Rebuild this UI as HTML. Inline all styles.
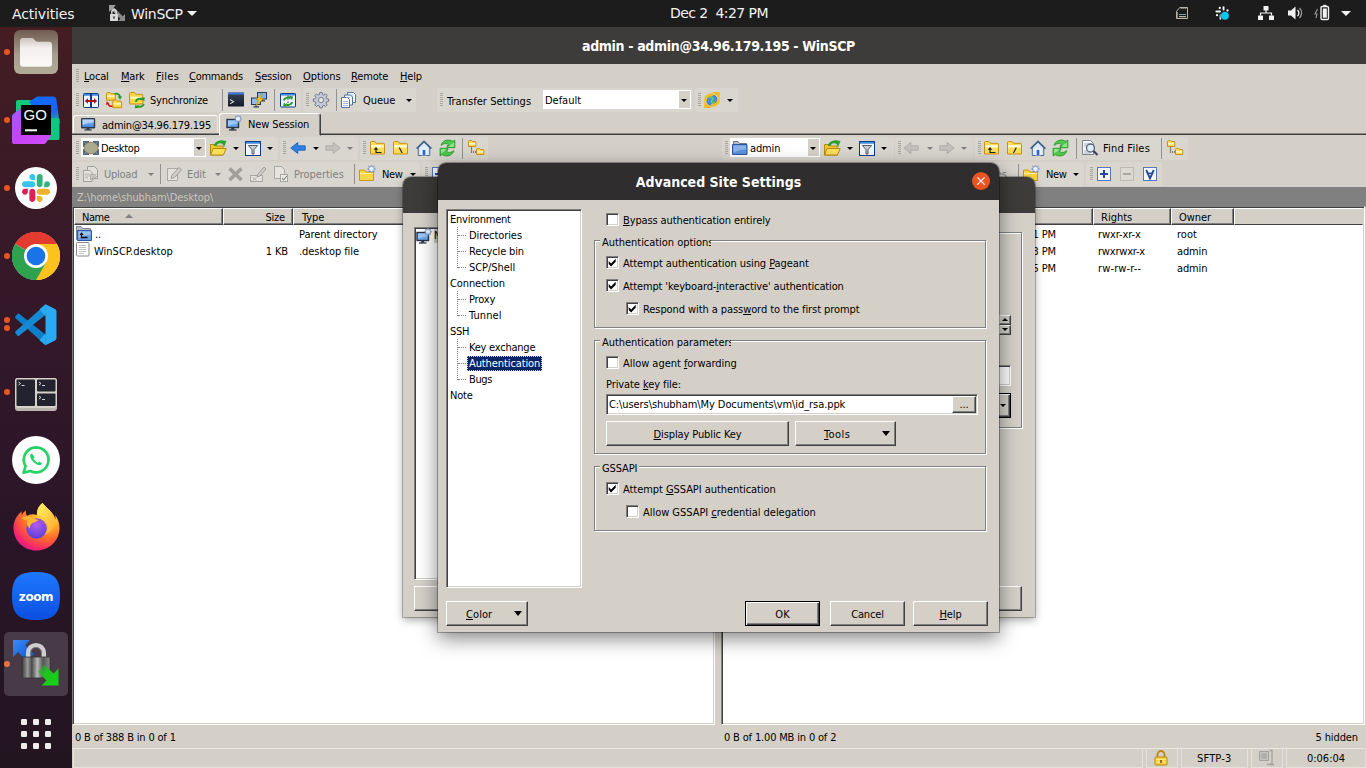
<!DOCTYPE html>
<html lang="en"><head><meta charset="utf-8"><title>WinSCP - Advanced Site Settings</title>
<style>
html,body{margin:0;padding:0}
body{width:1366px;height:768px;overflow:hidden;background:#d4d0c8;position:relative;
 font-family:"DejaVu Sans Condensed","DejaVu Sans","Liberation Sans",sans-serif;font-size:11px;font-stretch:condensed;color:#000;letter-spacing:-0.12px}
svg text{font-stretch:normal}
.a{position:absolute}
.t{position:absolute;white-space:pre;line-height:14px;height:14px}
.g{color:#808080}
u{text-decoration:underline;text-underline-offset:1px}
svg{position:absolute;overflow:visible}
#topbar{left:0;top:0;width:1366px;height:27px;background:#1c1c1c;color:#f2f2f2;font-size:14px;letter-spacing:0;font-stretch:normal;font-family:"DejaVu Sans","Liberation Sans",sans-serif}
#topbar .t{line-height:27px;height:27px;top:1px}
#dock{left:0;top:27px;width:72px;height:741px;background:linear-gradient(180deg,#451d22 0%,#3e1b25 12%,#331829 40%,#291527 70%,#231520 100%)}
.dot{position:absolute;left:4px;width:6px;height:6px;border-radius:3px;background:#e95420}
#wtitle{left:72px;top:27px;width:1294px;height:37px;background:#3d3c3a;color:#fff;font-weight:bold;font-size:14px;text-align:center;line-height:38px;letter-spacing:0;text-indent:-1px}
.tb{position:absolute;background:#d9d6cf;border-radius:3px}
.grip{position:absolute;width:3px;border-left:0;background:repeating-linear-gradient(180deg,#a8a59e 0,#a8a59e 1px,transparent 1px,transparent 2px)}
.sep{position:absolute;width:1px;background:#949290}
.sunk{position:absolute;border:1px solid;border-color:#808080 #fff #fff #808080;box-shadow:inset 1px 1px 0 #404040,inset -1px -1px 0 #d4d0c8;background:#fff;box-sizing:border-box}
.btn{position:absolute;border:1px solid;border-color:#fff #404040 #404040 #fff;box-shadow:inset -1px -1px 0 #808080,inset 1px 1px 0 #d4d0c8;background:#d4d0c8;box-sizing:border-box;text-align:center}
.hdr{position:absolute;border:1px solid;border-color:#fff #404040 #404040 #fff;box-shadow:inset -1px -1px 0 #808080;background:#d4d0c8;box-sizing:border-box;height:17px}
.grp{position:absolute;border:1px solid #808080;box-shadow:1px 1px 0 #fff,inset 1px 1px 0 #fff;box-sizing:border-box}
.glab{position:absolute;background:#d4d0c8;white-space:pre;line-height:14px;height:14px;overflow:hidden}
.cb{position:absolute;width:13px;height:13px;box-sizing:border-box;background:#fff;border:1px solid;border-color:#808080 #fff #fff #808080;box-shadow:inset 1px 1px 0 #404040,inset -1px -1px 0 #d4d0c8}
.arr{position:absolute;width:0;height:0;border-left:3px solid transparent;border-right:3px solid transparent;border-top:3px solid #000}
.arr.d{border-top-color:#808080}
.dlg{position:absolute;background:#d4d0c8;border-radius:8px 8px 0 0}
.dtitle{position:absolute;left:0;top:0;right:0;border-radius:8px 8px 0 0;color:#fff;font-weight:bold;font-size:14px;text-align:center}
.tree .t{left:0}
.dots{position:absolute;border-left:1px dotted #808080}
.dotsh{position:absolute;border-top:1px dotted #808080;height:0}
</style></head>
<body>
<div id="topbar" class="a"><div class="t" style="left:12px;letter-spacing:-0.158px;">Activities</div><svg style="left:108px;top:4px" width="18" height="18" viewBox="0 0 18 18" ><path d="M1 1h7l-2.300 2.300 4.500 4.500-2.400 2.400-4.500-4.500-2.300 2.300z" fill="#9c9c9c"/><path d="M17 17h-7l2.300-2.300-4.500-4.500 2.400-2.400 4.500 4.500 2.300-2.300z" fill="#8a8a8a"/><rect x="2" y="10" width="8" height="7" rx=".6" fill="#d8d8d8"/><path d="M3.800 10v-2a2.200 2.200 0 0 1 4.400 0v2" fill="none" stroke="#d8d8d8" stroke-width="1.400"/><rect x="5.300" y="12.300" width="1.400" height="2.400" fill="#333"/></svg><div class="t" style="left:131px;letter-spacing:-0.276px;">WinSCP</div><div class="a" style="left:187px;top:11px;width:0;height:0;border-left:5px solid transparent;border-right:5px solid transparent;border-top:5px solid #f2f2f2"></div><div class="t" style="left:670px;top:0;letter-spacing:-0.555px;">Dec 2  4:27 PM</div><svg style="left:1176px;top:7px" width="12" height="12" viewBox="0 0 12 12" ><path d="M3.800 .5h7.700v11h-11v-7.200z" fill="none" stroke="#b8b4aa" stroke-width="1"/><path d="M4.500 .8l1 1.100 1-1.100 1 1.100 1-1.100 1 1.100 1-1.100M.8 5l1.100 1-1.100 1 1.100 1-1.100 1 1.100 1-1.100 1" fill="none" stroke="#b8b4aa" stroke-width=".8"/><path d="M3 7.500h7" stroke="#7f9aa8" stroke-width="1"/><path d="M3 9.700h7" stroke="#ddd8cc" stroke-width="1"/></svg><svg style="left:1215px;top:5px" width="16" height="16" viewBox="0 0 16 16" ><g fill="#f4f4f4"><circle cx="4.800" cy="3" r="1.150"/><rect x="7.600" y="1.200" width="1.900" height="4.300" rx=".9"/><rect x=".4" y="5.600" width="5.600" height="1.900" rx=".9"/><circle cx="12.500" cy="5.500" r="1.150"/><circle cx="2" cy="10.200" r="1.150"/><rect x="4.600" y="9.300" width="1.600" height="5.500" rx=".8"/></g><circle cx="9.900" cy="10.800" r="4.300" fill="#0bc8f2" stroke="#1c1c1c" stroke-width=".5"/></svg><svg style="left:1258px;top:5px" width="16" height="16" viewBox="0 0 16 16" ><g fill="#f2f2f2"><rect x="5.500" y="1" width="5" height="4.500" rx=".6"/><rect x="0" y="10.500" width="5" height="4.500" rx=".6"/><rect x="11" y="10.500" width="5" height="4.500" rx=".6"/></g><path d="M8 5v3M2.500 10.500v-2.500h11v2.500" fill="none" stroke="#f2f2f2" stroke-width="1.200"/></svg><svg style="left:1287px;top:5px" width="16" height="16" viewBox="0 0 16 16" ><path d="M1 5.500h3l4.500-4v13l-4.500-4h-3z" fill="#f2f2f2"/><path d="M10.500 5a4 4 0 0 1 0 6" fill="none" stroke="#f2f2f2" stroke-width="1.300"/><path d="M12.500 3a7 7 0 0 1 0 10" fill="none" stroke="#9a9a9a" stroke-width="1.300"/></svg><svg style="left:1314px;top:4px" width="18" height="18" viewBox="0 0 18 18" ><path d="M3.500 5l-2.500 5h2l-1 4" fill="none" stroke="#9a9a9a" stroke-width="1.100"/><rect x="7" y="2.500" width="7.500" height="13" rx="1.200" fill="none" stroke="#f2f2f2" stroke-width="1.400"/><rect x="9.300" y=".8" width="3" height="2" fill="#f2f2f2"/><rect x="8.800" y="4.500" width="4" height="9.200" fill="#f2f2f2"/></svg><div class="a" style="left:1341px;top:11px;width:0;height:0;border-left:5px solid transparent;border-right:5px solid transparent;border-top:5px solid #f2f2f2"></div></div>
<div id="dock" class="a"><div class="dot" style="top:22px"></div>
<div class="dot" style="top:90px"></div>
<div class="dot" style="top:158px"></div>
<div class="dot" style="top:226px"></div>
<div class="dot" style="top:362px"></div>
<div class="dot" style="top:634px"></div>
<div class="dot" style="top:290px"></div>
<div class="dot" style="top:298px"></div>
<div class="a" style="left:4px;top:605px;width:64px;height:64px;border-radius:5px;background:rgba(255,255,255,.16)"></div>
<svg style="left:14px;top:3px" width="44" height="44" viewBox="0 0 44 44" ><defs><linearGradient id="fg" x1="0" y1="0" x2="0" y2="1"><stop offset="0" stop-color="#6f5b52"/><stop offset=".55" stop-color="#a69e8c"/><stop offset="1" stop-color="#b2ab98"/></linearGradient><linearGradient id="ff" x1="0" y1="0" x2="0" y2="1"><stop offset="0" stop-color="#cfc4c0"/><stop offset=".35" stop-color="#f3efee"/><stop offset="1" stop-color="#fbf9f8"/></linearGradient></defs>
<rect x="0" y="0" width="44" height="44" rx="6" fill="url(#fg)"/><path d="M6 11q0-3 3-3h8.500q1.500 0 2.500 1.200l1.300 1.500q.8 1 2.500 1h11.200q3 0 3 3v19q0 3-3 3h-26q-3 0-3-3z" fill="url(#ff)"/></svg>
<svg style="left:12px;top:69px" width="48" height="48" viewBox="0 0 48 48" ><defs><linearGradient id="g1" x1="0" y1="0" x2="1" y2="1"><stop offset="0" stop-color="#9a5cff"/><stop offset=".5" stop-color="#c445f5"/><stop offset="1" stop-color="#d34dfa"/></linearGradient><linearGradient id="g2" x1=".2" y1="0" x2=".7" y2="1"><stop offset="0" stop-color="#0a6bff"/><stop offset=".6" stop-color="#1f62f0"/><stop offset="1" stop-color="#10c090"/></linearGradient></defs>
<rect x="4" y="4" width="16" height="22" rx="2" fill="#14c77f"/><path d="M17 6l8-5.500h16.500q2.500 0 2.800 2.500l3.400 24-8 6z" fill="url(#g2)"/><path d="M36 22h10q1.500 0 1.500 1.500v19q0 1.500-1.500 1.500h-10z" fill="#10c681"/><path d="M0 20.500q0-1.500 1.200-2.400l8.800-6.600v27.500h29.500l-5.500 7.800q-1 1.200-2.500 1.200h-29.800q-1.700 0-1.700-1.700z" fill="url(#g1)"/><rect x="9" y="9" width="30" height="30" fill="#000"/><rect x="13" y="33.300" width="12" height="2" fill="#fff"/><text x="11.400" y="24.300" font-family="Liberation Sans,sans-serif" font-size="15" fill="#fff" letter-spacing=".3">GO</text></svg>
<svg style="left:15px;top:140px" width="42" height="42" viewBox="0 0 42 42" ><circle cx="21" cy="21" r="21" fill="#fff"/>
<g transform="translate(7 7) scale(.228)"><path fill="#e01e5a" d="M25.800 77.600c0 7.100-5.800 12.900-12.900 12.900S0 84.700 0 77.600s5.800-12.900 12.900-12.900h12.900v12.900zm6.500 0c0-7.100 5.800-12.900 12.900-12.900s12.900 5.800 12.900 12.900v32.300c0 7.100-5.800 12.900-12.900 12.900s-12.900-5.800-12.900-12.900V77.600z"/><path fill="#36c5f0" d="M45.200 25.800c-7.100 0-12.900-5.800-12.900-12.900S38.100 0 45.200 0s12.900 5.800 12.900 12.900v12.900H45.200zm0 6.500c7.100 0 12.900 5.800 12.900 12.900s-5.800 12.900-12.900 12.900H12.900C5.800 58.100 0 52.300 0 45.200s5.800-12.900 12.900-12.900h32.300z"/><path fill="#2eb67d" d="M97 45.200c0-7.100 5.800-12.900 12.900-12.900s12.900 5.800 12.900 12.900-5.800 12.900-12.900 12.900H97V45.200zm-6.500 0c0 7.100-5.800 12.900-12.900 12.900s-12.900-5.800-12.900-12.900V12.900C64.700 5.800 70.500 0 77.600 0s12.900 5.800 12.900 12.900v32.300z"/><path fill="#ecb22e" d="M77.600 97c7.100 0 12.900 5.800 12.900 12.900s-5.800 12.900-12.900 12.900-12.900-5.800-12.900-12.900V97h12.900zm0-6.500c-7.100 0-12.900-5.800-12.900-12.900s5.800-12.900 12.900-12.900h32.300c7.100 0 12.900 5.800 12.900 12.900s-5.800 12.900-12.900 12.900H77.600z"/></g></svg>
<svg style="left:12px;top:205px" width="48" height="48" viewBox="0 0 48 48" ><circle cx="24" cy="24" r="24" fill="#fff"/><path d="M24 24L3.220 12A24 24 0 0 1 44.780 12z" fill="#e33b2e"/><path d="M24 24l20.780-12A24 24 0 0 1 24 48z" fill="#fcc31e"/><path d="M24 24l0 24A24 24 0 0 1 3.220 12z" fill="#2fa24f"/>
<path d="M24 12h20.780A24 24 0 0 0 3.220 12z" fill="#e33b2e"/><path d="M34.390 30L24 48A24 24 0 0 0 44.780 12H24z" fill="#fcc31e"/><path d="M13.610 30L3.220 12A24 24 0 0 0 24 48l10.390-18z" fill="#2fa24f"/>
<circle cx="24" cy="24" r="12" fill="#fff"/><circle cx="24" cy="24" r="9.300" fill="#1a73e8"/></svg>
<svg style="left:15px;top:275.5px" width="42" height="43.5" viewBox="0 0 42 42" preserveAspectRatio="none"><path d="M3.800 10.200L31 31v10L.6 14.800q-.9-1-.1-2l2-2.300q.6-.7 1.300-.3z" fill="#0d7fc8"/><path d="M3.800 31.800L31 11V1L.6 27.200q-.9 1-.1 2l2 2.300q.6.700 1.300.3z" fill="#1689d2"/><path d="M30.500 1.200l9.500 4.500q1.500.8 1.500 2.500v25.600q0 1.700-1.500 2.500l-9.500 4.500z" fill="#2aaaf2"/><path d="M30.500 1.200l-6 4.800 6 6.800v16.400l-6 6.800 6 4.800z" fill="#2aaaf2"/></svg>
<svg style="left:15px;top:351px" width="42" height="33" viewBox="0 0 42 33" ><rect x="0" y="0" width="42" height="33" rx="3" fill="#b9b5ae"/><rect x="0" y="0" width="42" height="30" rx="3" fill="#d4d1cb"/><rect x="1.500" y="1.500" width="18.500" height="26.500" rx="1" fill="#23222f"/><rect x="22" y="1.500" width="18.500" height="12" rx="1" fill="#23222f"/><rect x="22" y="15.500" width="18.500" height="12.500" rx="1" fill="#23222f"/><path d="M3.500 4l2 1.500-2 1.500M6.500 7.500h3M24 4l2 1.500-2 1.500M27 7.500h3M24 18l2 1.500-2 1.500M27 21.500h3" fill="none" stroke="#e8e8e8" stroke-width=".9"/></svg>
<svg style="left:12px;top:409px" width="48" height="48" viewBox="0 0 48 48" ><circle cx="24" cy="24" r="24" fill="#fff"/><g transform="translate(24 24) scale(.94) translate(-24 -24)"><path d="M24.300 10.500a13.300 13.300 0 0 0-11.400 20.100l-2.100 7 7.300-1.900a13.300 13.300 0 1 0 6.200-25.200z" fill="none" stroke="#25d366" stroke-width="2.900" stroke-linejoin="round"/><path d="M19.800 17.200c-.6-.1-1.300.3-1.700 1-.5.900-.5 2.200.2 3.700 1.500 3.200 4 5.700 7.200 7.100 1.600.7 2.900.6 3.800 0 .7-.5 1-1.200.9-1.700l-2.900-1.600-1.300 1.300c-1.900-.8-3.800-2.600-4.700-4.600l1.300-1.400z" fill="#25d366"/></g></svg>
<svg style="left:13px;top:476px" width="47" height="48" viewBox="0 0 47 48" ><defs><radialGradient id="fx1" cx=".75" cy=".15" r="1"><stop offset="0" stop-color="#fff36a"/><stop offset=".3" stop-color="#ffbd2e"/><stop offset=".6" stop-color="#ff6a2a"/><stop offset=".85" stop-color="#f5246e"/><stop offset="1" stop-color="#d9169a"/></radialGradient><radialGradient id="fx2" cx=".5" cy=".3" r=".7"><stop offset="0" stop-color="#b65cf0"/><stop offset="1" stop-color="#5b3fd6"/></radialGradient><linearGradient id="fx3" x1="0" y1="0" x2="1" y2="1"><stop offset="0" stop-color="#fff36a"/><stop offset="1" stop-color="#ffa92a"/></linearGradient></defs>
<path d="M29.500 0c-4 3-6 7.500-5.500 12-4-1.500-8.500-.5-10 1-1-1.500-1.500-3.500-1-5.500-2 1-3.500 3-4 4.500-.5-1-.5-2.500-.3-3.700C3 13 0 19.500 .5 26.500 1.500 38.500 11 47.500 23.500 47.500S46 38 46.500 26c.3-5.500-1.500-10.500-4.500-14 .5 1.500 .6 3 .4 4.500C40.500 9.500 35 6.500 29.500 0z" fill="url(#fx1)"/><circle cx="23.500" cy="25.500" r="10.200" fill="url(#fx2)"/><path d="M8 15.500c3-2.500 8-3 12-1 2 1 3.500 2.500 6 2.500-2 .5-3 2-5 2.500-3 .8-4.500 3-4 6-2.500-1.500-4-5-2.500-8-2.500-.5-4.500-1.500-6.500-2z" fill="#ffb52e"/><path d="M29.500 0c-4 3-6 7.500-5.500 12 4.500 0 9 3 10.500 7 1.500 4 .5 9-3 12.500 6-1.500 11-7 11-14.500C40.500 9.500 35 6.500 29.500 0z" fill="url(#fx3)" opacity=".9"/></svg>
<svg style="left:12px;top:545px" width="48" height="48" viewBox="0 0 48 48" ><defs><linearGradient id="zg" x1="0" y1="0" x2="0" y2="1"><stop offset="0" stop-color="#1f78ff"/><stop offset="1" stop-color="#0b4fe0"/></linearGradient></defs><path d="M24 0C6 0 0 6 0 24s6 24 24 24 24-6 24-24S42 0 24 0z" fill="url(#zg)"/><text x="24" y="28.500" text-anchor="middle" font-family="DejaVu Sans,Liberation Sans,sans-serif" font-weight="bold" font-size="12" letter-spacing="-.4" fill="#fff">zoom</text></svg>
<svg style="left:13px;top:613px" width="46" height="46" viewBox="0 0 46 46" ><defs><linearGradient id="wl" x1="0" y1="0" x2="1" y2="0"><stop offset="0" stop-color="#3c3c3c"/><stop offset=".2" stop-color="#9a9a9a"/><stop offset=".35" stop-color="#4a4a4a"/><stop offset=".55" stop-color="#b8b8b8"/><stop offset=".75" stop-color="#555"/><stop offset="1" stop-color="#8a8a8a"/></linearGradient><linearGradient id="wb" x1="0" y1="0" x2="1" y2="1"><stop offset="0" stop-color="#3b8cf5"/><stop offset="1" stop-color="#0a4fd0"/></linearGradient><linearGradient id="wg" x1="0" y1="0" x2="1" y2="1"><stop offset="0" stop-color="#2fae2f" stop-opacity=".15"/><stop offset=".4" stop-color="#1fc21f"/><stop offset="1" stop-color="#12d612"/></linearGradient></defs>
<path d="M0 0h17l-5 5 9 9-7 7-9-9-5 5z" fill="url(#wb)"/><path d="M15 19v-6a8 8 0 0 1 16 0v6" fill="none" stroke="#cfcfcf" stroke-width="4.200"/><path d="M17.500 19v-6a5.500 5.500 0 0 1 11 0v6" fill="none" stroke="#8a8a8a" stroke-width=".8"/><rect x="9" y="17" width="28" height="21" rx="1.500" fill="url(#wl)" stroke="#333" stroke-width=".8"/><path d="M45.500 45.500h-17l5-5-9-9 7-7 9 9 5-5z" fill="url(#wg)"/></svg>
<svg style="left:0px;top:0px" width="72" height="741" viewBox="0 0 72 741" ><rect x="21" y="692" width="6" height="6" rx="1.300" fill="#efedec"/><rect x="33" y="692" width="6" height="6" rx="1.300" fill="#efedec"/><rect x="45" y="692" width="6" height="6" rx="1.300" fill="#efedec"/><rect x="21" y="704" width="6" height="6" rx="1.300" fill="#efedec"/><rect x="33" y="704" width="6" height="6" rx="1.300" fill="#efedec"/><rect x="45" y="704" width="6" height="6" rx="1.300" fill="#efedec"/><rect x="21" y="716" width="6" height="6" rx="1.300" fill="#efedec"/><rect x="33" y="716" width="6" height="6" rx="1.300" fill="#efedec"/><rect x="45" y="716" width="6" height="6" rx="1.300" fill="#efedec"/></svg></div>
<div id="wtitle" class="a"><span style="letter-spacing:-0.337px;">admin - admin@34.96.179.195 - WinSCP</span></div>
<div class="grip" style="left:76px;top:69px;height:14px"></div>
<div class="t " style="left:84px;top:70px;letter-spacing:-0.228px;"><u>L</u>ocal</div>
<div class="t " style="left:121px;top:70px;letter-spacing:-0.227px;"><u>M</u>ark</div>
<div class="t " style="left:156px;top:70px;letter-spacing:0.322px;"><u>F</u>iles</div>
<div class="t " style="left:189px;top:70px;letter-spacing:-0.285px;"><u>C</u>ommands</div>
<div class="t " style="left:255px;top:70px;letter-spacing:-0.145px;"><u>S</u>ession</div>
<div class="t " style="left:303px;top:70px;letter-spacing:-0.098px;"><u>O</u>ptions</div>
<div class="t " style="left:351px;top:70px;letter-spacing:-0.157px;"><u>R</u>emote</div>
<div class="t " style="left:400px;top:70px;letter-spacing:-0.170px;"><u>H</u>elp</div>
<div class="tb" style="left:73px;top:88px;width:228px;height:24px;"></div>
<div class="tb" style="left:303px;top:88px;width:113px;height:24px;"></div>
<div class="tb" style="left:437px;top:88px;width:256px;height:24px;"></div>
<div class="tb" style="left:695px;top:88px;width:43px;height:24px;"></div>
<div class="grip" style="left:76px;top:93px;height:14px"></div>
<svg style="left:83px;top:93px" width="16" height="15" viewBox="0 0 16 15" ><rect x="0.500" y="0.500" width="15" height="14" rx=".8" fill="#eef5fd" stroke="#0b3c84" stroke-width="1"/><rect x="1" y="1" width="14" height="1.800" fill="#4a8ee0"/><rect x="7" y="0.500" width="2" height="14" fill="#0b3c84"/><path d="M1.800 8l3.200-2.800v1.900h6v-1.900l3.200 2.800-3.200 2.800v-1.900h-6v1.900z" fill="#a81414"/></svg>
<svg style="left:106px;top:92px" width="16" height="16" viewBox="0 0 16 16" ><path d="M.5 1.500q0-1 1-1h2.500l1 1.200h3.500q.8 0 .8.800v5.700h-8.800z" fill="#f8d848" stroke="#c8901a"/><path d="M1.200 3.300h7.600v1.800h-7.600z" fill="#fdf3b4"/><path d="M8.500 1.800c3-.6 5.500.8 5.500 3.500" fill="none" stroke="#2a9a2a" stroke-width="1.700"/><path d="M11.600 4.600l2.500 3.200 1.900-3.600z" fill="#2a9a2a"/><path d="M6.800 9q0-1 1-1h2.500l1 1.200h3.500q.8 0 .8.800v5.700h-8.800z" fill="#f8d848" stroke="#c8901a"/><path d="M7.500 10.800h7.600v1.800h-7.600z" fill="#fdf3b4"/><path d="M6.500 14.200c-2 .3-4-.8-4.500-2.500" fill="none" stroke="#d01818" stroke-width="1.500"/><path d="M0 13l.6-3.800 3 2.200z" fill="#d01818"/></svg>
<svg style="left:129px;top:92px" width="16" height="16" viewBox="0 0 16 16" ><path d="M.5 1.500q0-1 1-1h4l1.200 1.800h6.300q.8 0 .8.800v8.900h-13.300z" fill="#f8d848" stroke="#c8901a"/><path d="M1.200 4.600h12v2.500h-12z" fill="#fdf3b4"/><path d="M6.800 9.800a4 3.300 0 0 1 6.800-2" fill="none" stroke="#2a9a2a" stroke-width="1.900"/><path d="M12 5.600l3.800-.2-.6 4z" fill="#2a9a2a"/><path d="M14.800 11.800a4 3.300 0 0 1-6.800 2" fill="none" stroke="#2a9a2a" stroke-width="1.900"/><path d="M9.600 16l-3.800.2.600-4z" fill="#2a9a2a"/></svg>
<div class="t " style="left:150px;top:94px;letter-spacing:-0.210px;">Synchronize</div>
<div class="sep" style="left:222px;top:89px;height:22px"></div>
<svg style="left:228px;top:92px" width="16" height="16" viewBox="0 0 16 16" ><defs><linearGradient id="cg" x1="0" y1="0" x2="0" y2="1"><stop offset="0" stop-color="#3a4458"/><stop offset="1" stop-color="#141a28"/></linearGradient></defs><rect x="0" y=".5" width="16" height="14" rx=".6" fill="url(#cg)"/><rect x="0" y=".5" width="16" height="2" fill="#3f78dc"/><path d="M2 7.500l3.600 2.200-3.600 2.200" fill="none" stroke="#d8d8d8" stroke-width="1.100"/></svg>
<svg style="left:251px;top:92px" width="16" height="16" viewBox="0 0 16 16" ><rect x="6.500" y="0.500" width="9" height="6.500" fill="#7fb2f0" stroke="#2b3a55"/><path d="M11 7v1.500M9 8.800h5" stroke="#2b3a55" stroke-width="1.200"/><rect x="0.500" y="6" width="9" height="6.500" fill="#8fbcf4" stroke="#2b3a55"/><path d="M5 12.500v2M2.500 14.800h5.500" stroke="#2b3a55" stroke-width="1.200"/><path d="M11.500 1.500l-6.500 6.200h3l-3.500 6.300 8-7.500h-3.200z" fill="#ffd21c" stroke="#c8920b" stroke-width=".7"/></svg>
<div class="sep" style="left:274px;top:89px;height:22px"></div>
<svg style="left:280px;top:92px" width="16" height="16" viewBox="0 0 16 16" ><rect x="0.500" y="1.500" width="15" height="13.500" rx=".6" fill="#eef3fb" stroke="#0b3c84" stroke-width="1"/><rect x="1" y="2" width="14" height="1.600" fill="#4a8ee0"/><path d="M8 3.500v11.500" stroke="#1c3f94" stroke-dasharray="1.500 1.500"/><path d="M3.800 8.500a4.200 3.400 0 0 1 6.700-2.200" fill="none" stroke="#2a9a2a" stroke-width="2"/><path d="M9 4l4 .3-1 4z" fill="#2a9a2a"/><path d="M12.200 10a4.200 3.400 0 0 1-6.700 2.200" fill="none" stroke="#2a9a2a" stroke-width="2"/><path d="M7 14.500l-4-.3 1-4z" fill="#2a9a2a"/></svg>
<div class="grip" style="left:306px;top:93px;height:14px"></div>
<svg style="left:313px;top:92px" width="16" height="16" viewBox="0 0 16 16" ><path d="M6.8 0.5h2.4l.4 2 1.3.6 1.7-1.2 1.7 1.7-1.2 1.7.6 1.3 2 .4v2.4l-2 .4-.6 1.3 1.2 1.7-1.7 1.7-1.7-1.2-1.3.6-.4 2h-2.4l-.4-2-1.3-.6-1.7 1.2-1.7-1.7 1.2-1.7-.6-1.3-2-.4v-2.4l2-.4.6-1.3-1.2-1.7 1.7-1.7 1.7 1.2 1.3-.6z" fill="#c4c8d4" stroke="#6d7386" stroke-width=".9"/><circle cx="8" cy="8" r="2.6" fill="#e9e7e2" stroke="#6d7386" stroke-width=".9"/></svg>
<div class="sep" style="left:336px;top:89px;height:22px"></div>
<svg style="left:341px;top:92px" width="16" height="16" viewBox="0 0 16 16" ><path d="M6.5 0.5h6l2 2v8h-8z" fill="#f4f7fc" stroke="#54709c"/><path d="M3.5 3h6l2 2v8h-8z" fill="#f4f7fc" stroke="#54709c"/><path d="M0.5 5.5h6l2 2v8h-8z" fill="#fff" stroke="#54709c"/><path d="M2 9.500h5M2 11.500h5M2 13.500h5" stroke="#8aa6d4" stroke-width=".8"/><path d="M5 5.500h4M8 3h4" stroke="#8aa6d4" stroke-width=".8"/></svg>
<div class="t " style="left:363px;top:94px;letter-spacing:-0.066px;">Queue</div>
<div class="arr" style="left:406px;top:99px"></div>
<div class="grip" style="left:440px;top:93px;height:14px"></div>
<div class="t " style="left:447px;top:95px;letter-spacing:0.044px;">Transfer Settings</div>
<div class="a" style="left:543px;top:90px;width:148px;height:19px;background:#fff"></div>
<div class="t " style="left:545px;top:94px;letter-spacing:-0.025px;">Default</div>
<div class="a" style="left:679px;top:91px;width:11px;height:17px;background:#d4d0c8"></div>
<div class="arr" style="left:681px;top:99px"></div>
<div class="grip" style="left:698px;top:93px;height:14px"></div>
<svg style="left:704px;top:92px" width="16" height="16" viewBox="0 0 16 16" ><circle cx="8" cy="8.200" r="5.300" fill="#3f8ee6" stroke="#2a5ca8" stroke-width=".8"/><path d="M5 6c1.500-1.500 3.500-1 3.800.6s-1.800 1.800-1.200 3.400 2.200 1.200 3.200.4" fill="none" stroke="#6cc75c" stroke-width="2"/><path d="M1.800 9.500c-1-4 2.500-7.500 7.500-6.800" fill="none" stroke="#f4bc22" stroke-width="2.800"/><path d="M8.500 0h7.300v6.800z" fill="#f4bc22"/><path d="M14.200 6.500c1 4-2.500 7.500-7.500 6.800" fill="none" stroke="#f4bc22" stroke-width="2.800"/><path d="M7.500 16h-7.300v-6.800z" fill="#f4bc22"/></svg>
<div class="arr" style="left:727px;top:99px"></div>
<div class="a" style="left:72px;top:133px;width:1294px;height:1px;background:#8c8a86"></div>
<div class="a" style="left:72px;top:134px;width:1294px;height:1px;background:#3c3c3c"></div>
<div class="a" style="left:73px;top:115px;width:145px;height:18px;border:1px solid;border-color:#fff #e8e6e0 transparent #fff;border-radius:3px 3px 0 0;box-sizing:border-box;background:#d4d0c8"></div>
<div class="a" style="left:219px;top:113px;width:102px;height:23px;border:1px solid;border-color:#fff #404040 transparent #fff;box-shadow:inset -1px 0 0 #808080;border-radius:3px 3px 0 0;box-sizing:border-box;background:#d4d0c8"></div>
<svg style="left:81px;top:117px" width="16" height="16" viewBox="0 0 16 16" ><defs><linearGradient id="mg" x1="0" y1="0" x2="0" y2="1"><stop offset="0" stop-color="#a8ccf6"/><stop offset="1" stop-color="#3a7ee0"/></linearGradient></defs><rect x=".7" y="1.700" width="12.800" height="9" rx=".5" fill="url(#mg)" stroke="#2c3a4c" stroke-width="1.400"/><path d="M1.500 2.500h11.200v3c-4 0-7 .8-11.200 2.600z" fill="#c4dcf8" opacity=".75"/><rect x="5.600" y="11" width="3" height="1.600" fill="#2c3a4c"/><rect x="3.400" y="12.300" width="7.400" height="1.300" rx=".5" fill="#2c3a4c"/></svg>
<div class="t " style="left:102px;top:119px;letter-spacing:-0.226px;">admin@34.96.179.195</div>
<svg style="left:226px;top:115px" width="16" height="16" viewBox="0 0 16 16" ><rect x="1" y="4.5" width="11.5" height="8" fill="#6aa7ee" stroke="#2a3348" stroke-width="1.4"/><path d="M2 5.5h9.5v3c-4 0-6 1-9.5 2.5z" fill="#9cc8f8"/><rect x="5.2" y="13" width="3" height="1.6" fill="#2a3348"/><rect x="3" y="14.3" width="7.5" height="1.3" fill="#2a3348"/><polygon points="12.00,0.00 12.80,1.87 14.69,1.11 13.93,3.00 15.80,3.80 13.93,4.60 14.69,6.49 12.80,5.73 12.00,7.60 11.20,5.73 9.31,6.49 10.07,4.60 8.20,3.80 10.07,3.00 9.31,1.11 11.20,1.87" fill="#eef4ff" stroke="#6b86b8" stroke-width=".7"/></svg>
<div class="t " style="left:248px;top:118px;letter-spacing:-0.114px;">New Session</div>
<div class="tb" style="left:73px;top:137px;width:205px;height:23px;"></div>
<div class="tb" style="left:280px;top:137px;width:78px;height:23px;"></div>
<div class="tb" style="left:360px;top:137px;width:128px;height:23px;"></div>
<div class="grip" style="left:76px;top:141px;height:14px"></div>
<div class="a" style="left:81px;top:138px;width:125px;height:19px;background:#fff"></div>
<svg style="left:83px;top:141px" width="16" height="14" viewBox="0 0 16 14" ><g fill="#52627f" stroke="#39465f" stroke-width=".6"><rect x=".3" y=".3" width="5.400" height="5"/><rect x="10.300" y=".3" width="5.400" height="5"/><rect x=".3" y="8.700" width="5.400" height="5"/><rect x="10.300" y="8.700" width="5.400" height="5"/></g><path d="M.8.800l4 3.500M15.200.8l-4 3.500M.8 13.200l4-3.500M15.200 13.200l-4-3.500" stroke="#8d9ab2" stroke-width=".9"/><path d="M5 1.300h6l3.800 3.400v4.600l-3.800 3.400h-6l-3.800-3.400v-4.600z" fill="#a9ab8c" stroke="#77795e" stroke-width=".8"/></svg>
<div class="t " style="left:101px;top:142px;letter-spacing:-0.333px;">Desktop</div>
<div class="a" style="left:194px;top:139px;width:11px;height:17px;background:#d4d0c8"></div>
<div class="arr" style="left:196px;top:147px"></div>
<svg style="left:210px;top:140px" width="17" height="16" viewBox="0 0 17 16" ><path d="M0.5 4.500v10.500h12.500v-9h-6l-1.500-1.500z" fill="#f2c832" stroke="#b8890e"/><path d="M0.600 15l2.400-6.500h13.200l-2.800 6.500z" fill="#fadf5a" stroke="#b8890e"/><path d="M5 6c1-4 5-5.200 8.500-3" fill="none" stroke="#2fa02f" stroke-width="2.600"/><path d="M10.500 0l6 1-2.400 6z" fill="#2fa02f"/></svg>
<div class="arr" style="left:233px;top:147px"></div>
<svg style="left:245px;top:141px" width="16" height="15" viewBox="0 0 16 15" ><rect x="0.500" y="0.500" width="15" height="14" fill="#f2f6fc" stroke="#0b3c84" stroke-width="1"/><rect x="1" y="1" width="14" height="1.800" fill="#4a8ee0"/><path d="M3.500 4.500h9l-3.500 4.200v4.300h-2v-4.300z" fill="#c8ccd4" stroke="#4a4e58" stroke-width=".9"/></svg>
<div class="arr" style="left:267px;top:147px"></div>
<div class="grip" style="left:283px;top:141px;height:14px"></div>
<svg style="left:290px;top:140px" width="16" height="16" viewBox="0 0 16 16" ><path d="M0.8 8l7-5.5v3.3h7.4v4.4h-7.4v3.3z" fill="#2f7fe6" stroke="#1a55b0" stroke-width=".8"/></svg>
<div class="arr" style="left:313px;top:147px"></div>
<svg style="left:325px;top:140px" width="16" height="16" viewBox="0 0 16 16" ><path d="M15.2 8l-7-5.5v3.3h-7.4v4.4h7.4v3.3z" fill="#c4c2bc" stroke="#a8a6a0" stroke-width=".8"/></svg>
<div class="arr d" style="left:347px;top:147px"></div>
<div class="grip" style="left:363px;top:141px;height:14px"></div>
<svg style="left:370px;top:140px" width="16" height="16" viewBox="0 0 16 16" ><path d="M.5 2.500q0-1 1-1h3.500l1.300 1.800h7.200q1 0 1 1v9.700h-14z" fill="#f9dc55" stroke="#c8901a"/><path d="M1.200 5.200h12.600v2h-12.600z" fill="#fffbe0"/><path d="M1.200 7.200h12.600v1h-12.600z" fill="#fdf0a0"/><path d="M11.500 12.500h-5.500v-3.500" fill="none" stroke="#222" stroke-width="1.150"/><path d="M3.700 9.800l2.300-2.800 2.300 2.800z" fill="#222"/></svg>
<svg style="left:393px;top:140px" width="16" height="16" viewBox="0 0 16 16" ><path d="M.5 2.500q0-1 1-1h3.500l1.300 1.800h7.200q1 0 1 1v9.700h-14z" fill="#f9dc55" stroke="#c8901a"/><path d="M1.200 5.200h12.600v2h-12.600z" fill="#fffbe0"/><path d="M1.200 7.200h12.600v1h-12.600z" fill="#fdf0a0"/><path d="M6.300 7.500l2.800 5.500" stroke="#222" stroke-width="1.200"/></svg>
<svg style="left:416px;top:140px" width="16" height="16" viewBox="0 0 16 16" ><path d="M2.300 7.800v7.700h11.400v-7.700l-5.700-5.600z" fill="#dce9f9" stroke="#4a6890" stroke-width="1"/><path d="M0.600 8.600l7.400-7.400 7.400 7.400" fill="none" stroke="#3f5f8a" stroke-width="1.500"/><rect x="5.600" y="8.800" width="4.800" height="6.700" fill="#fff"/><rect x="6.600" y="9.800" width="2.800" height="5.700" fill="#2a68d0"/></svg>
<svg style="left:440px;top:140px" width="16" height="16" viewBox="0 0 16 16" ><path d="M1 5C2 2 5 0 8 0c2 0 3.500.5 4.800 1.400l2-1.400v7.700h-7.600l-.2-1.700 1.600-1c-1.100-1.400-3.100-1.800-4.800-1.200-1 .4-1.600 1-2.200 1.700z" fill="#4fc64f" stroke="#1f8f1f" stroke-width=".8" stroke-linejoin="round"/><path d="M1 5C2 2 5 0 8 0c2 0 3.500.5 4.800 1.400l2-1.400v7.700h-7.600l-.2-1.700 1.600-1c-1.100-1.400-3.100-1.800-4.800-1.200-1 .4-1.600 1-2.200 1.700z" fill="#4fc64f" stroke="#1f8f1f" stroke-width=".8" stroke-linejoin="round" transform="rotate(180 7.450 8)"/><path d="M10 5l4-2.500v4.500h-5z" fill="#8fe28f"/><path d="M5 11l-4 2.500v-4.500h5z" fill="#8fe28f"/></svg>
<div class="sep" style="left:462px;top:138px;height:21px"></div>
<svg style="left:468px;top:140px" width="16" height="16" viewBox="0 0 16 16" ><path d="M.5 1.500q0-1 1-1h2l1 1h2.500q.8 0 .8.800v4.200h-7.300z" fill="#f9dc55" stroke="#c8901a"/><path d="M1.200 3.200h6v1.300h-6z" fill="#fffbe0"/><path d="M8.500 9.500q0-1 1-1h2l1 1h2.500q.8 0 .8.800v4.200h-7.300z" fill="#f9dc55" stroke="#c8901a"/><path d="M9.200 11.200h6v1.300h-6z" fill="#fffbe0"/><path d="M3.500 7.500v4.500h4.500" fill="none" stroke="#222" stroke-width="1.100" stroke-dasharray="1 1"/></svg>
<div class="tb" style="left:73px;top:162px;width:347px;height:24px;"></div>
<div class="tb" style="left:422px;top:162px;width:40px;height:24px;"></div>
<div class="grip" style="left:76px;top:167px;height:14px"></div>
<svg style="left:83px;top:166px" width="16" height="16" viewBox="0 0 16 16" ><path d="M4.500 0.500h7l3 3v9h-10z" fill="#e2dfd8" stroke="#a19f9a"/><path d="M0.500 4.500h6.500l2 2v9h-8.500z" fill="#e6e3dc" stroke="#a19f9a"/><path d="M2 8h5M2 10h5M2 12h3" stroke="#b5b2ac"/><path d="M8 15l5-5v2.500l2.500-2.500v5.500h-5.500l2.500-2.500h-2.500z" fill="#c9c6bf" stroke="#a19f9a" stroke-width=".6" transform="rotate(180 11.500 12)"/></svg>
<div class="t g" style="left:104px;top:168px;letter-spacing:-0.240px;">Upload</div>
<div class="arr d" style="left:148px;top:173px"></div>
<div class="sep" style="left:160px;top:164px;height:20px"></div>
<svg style="left:166px;top:166px" width="16" height="16" viewBox="0 0 16 16" ><path d="M1.500 2.500h10v12h-10z" fill="#e4e1da" stroke="#a9a7a1"/><path d="M5 12.500l1-3.500 7-7.500 2.500 2.500-7 7.500z" fill="#cfccc6" stroke="#9c9a94" stroke-width=".9"/></svg>
<div class="t g" style="left:187px;top:168px;letter-spacing:-0.105px;">Edit</div>
<div class="arr d" style="left:215px;top:173px"></div>
<svg style="left:228px;top:166px" width="16" height="16" viewBox="0 0 16 16" ><path d="M1.500 2.500l12 11.500M13.500 2.500l-12 11.500" stroke="#a19f9a" stroke-width="3.700"/></svg>
<svg style="left:250px;top:166px" width="16" height="16" viewBox="0 0 16 16" ><rect x="0.500" y="9.500" width="12" height="6" fill="#e4e1da" stroke="#a9a7a1"/><path d="M3 11.500l3 3M6 11.500l-3 3" stroke="#a9a7a1"/><path d="M7 11l1-3 6-7 2 2-6 7z" fill="#cfccc6" stroke="#9c9a94" stroke-width=".9"/></svg>
<svg style="left:273px;top:166px" width="16" height="16" viewBox="0 0 16 16" ><path d="M1.500 0.500h7l3 3v9h-10z" fill="#e6e3dc" stroke="#a9a7a1"/><rect x="7.500" y="8.500" width="7" height="7" fill="#eceae4" stroke="#a9a7a1"/><path d="M9 12l1.800 1.800 3-3.800" fill="none" stroke="#8f8d88" stroke-width="1.2"/></svg>
<div class="t g" style="left:294px;top:168px;letter-spacing:-0.017px;">Properties</div>
<div class="sep" style="left:354px;top:164px;height:20px"></div>
<svg style="left:359px;top:165px" width="17" height="16" viewBox="0 0 17 16" ><path d="M0.500 5v10.500h14v-8.500h-7.500l-1.500-2z" fill="#f7d64a" stroke="#c89a12"/><path d="M1 8.500h13" stroke="#fdf0a8"/><polygon points="12.50,0.00 13.34,1.97 15.33,1.17 14.53,3.16 16.50,4.00 14.53,4.84 15.33,6.83 13.34,6.03 12.50,8.00 11.66,6.03 9.67,6.83 10.47,4.84 8.50,4.00 10.47,3.16 9.67,1.17 11.66,1.97" fill="#eef4ff" stroke="#6b86b8" stroke-width=".7"/></svg>
<div class="t " style="left:382px;top:168px;letter-spacing:-0.398px;">New</div>
<div class="arr" style="left:410px;top:173px"></div>
<div class="grip" style="left:425px;top:167px;height:14px"></div>
<svg style="left:432px;top:167px" width="14" height="14" viewBox="0 0 14 14" ><rect x="0.500" y="0.500" width="13" height="13" fill="#f6f8fc" stroke="#5878b8" stroke-width="1"/><path d="M7 3v8M3 7h8" stroke="#2a4a9a" stroke-width="2"/></svg>
<div class="tb" style="left:722px;top:137px;width:172px;height:23px;"></div>
<div class="tb" style="left:895px;top:137px;width:78px;height:23px;"></div>
<div class="tb" style="left:974px;top:137px;width:214px;height:23px;"></div>
<div class="grip" style="left:725px;top:141px;height:14px"></div>
<div class="a" style="left:730px;top:138px;width:90px;height:19px;background:#fff"></div>
<svg style="left:732px;top:140px" width="16" height="16" viewBox="0 0 16 16" ><path d="M1.500 1.500v12h13v-10h-7l-1.500-2z" fill="#b8bcc4" stroke="#6c7486"/><path d="M0.500 4.500h14.500v10h-14.500z" fill="#5f8fd8" stroke="#2f55a0"/><path d="M1.500 5.500h12.500v4c-4 0-8 1-12.500 3z" fill="#8db4ea"/></svg>
<div class="t " style="left:750px;top:142px;letter-spacing:-0.123px;">admin</div>
<div class="a" style="left:808px;top:139px;width:11px;height:17px;background:#d4d0c8"></div>
<div class="arr" style="left:810px;top:147px"></div>
<svg style="left:824px;top:140px" width="17" height="16" viewBox="0 0 17 16" ><path d="M0.5 4.500v10.500h12.500v-9h-6l-1.500-1.500z" fill="#f2c832" stroke="#b8890e"/><path d="M0.600 15l2.400-6.500h13.200l-2.800 6.500z" fill="#fadf5a" stroke="#b8890e"/><path d="M5 6c1-4 5-5.200 8.500-3" fill="none" stroke="#2fa02f" stroke-width="2.600"/><path d="M10.500 0l6 1-2.400 6z" fill="#2fa02f"/></svg>
<div class="arr" style="left:847px;top:147px"></div>
<svg style="left:859px;top:141px" width="16" height="15" viewBox="0 0 16 15" ><rect x="0.500" y="0.500" width="15" height="14" fill="#f2f6fc" stroke="#0b3c84" stroke-width="1"/><rect x="1" y="1" width="14" height="1.800" fill="#4a8ee0"/><path d="M3.500 4.500h9l-3.500 4.200v4.300h-2v-4.300z" fill="#c8ccd4" stroke="#4a4e58" stroke-width=".9"/></svg>
<div class="arr" style="left:881px;top:147px"></div>
<div class="grip" style="left:898px;top:141px;height:14px"></div>
<svg style="left:903px;top:140px" width="16" height="16" viewBox="0 0 16 16" ><path d="M0.8 8l7-5.5v3.3h7.4v4.4h-7.4v3.3z" fill="#c4c2bc" stroke="#a8a6a0" stroke-width=".8"/></svg>
<div class="arr d" style="left:927px;top:147px"></div>
<svg style="left:939px;top:140px" width="16" height="16" viewBox="0 0 16 16" ><path d="M15.2 8l-7-5.5v3.3h-7.4v4.4h7.4v3.3z" fill="#c4c2bc" stroke="#a8a6a0" stroke-width=".8"/></svg>
<div class="arr d" style="left:961px;top:147px"></div>
<div class="grip" style="left:978px;top:141px;height:14px"></div>
<svg style="left:984px;top:140px" width="16" height="16" viewBox="0 0 16 16" ><path d="M.5 2.500q0-1 1-1h3.500l1.300 1.800h7.200q1 0 1 1v9.700h-14z" fill="#f9dc55" stroke="#c8901a"/><path d="M1.200 5.200h12.600v2h-12.600z" fill="#fffbe0"/><path d="M1.200 7.200h12.600v1h-12.600z" fill="#fdf0a0"/><path d="M11.500 12.500h-5.500v-3.500" fill="none" stroke="#222" stroke-width="1.150"/><path d="M3.700 9.800l2.300-2.800 2.300 2.800z" fill="#222"/></svg>
<svg style="left:1007px;top:140px" width="16" height="16" viewBox="0 0 16 16" ><path d="M.5 2.500q0-1 1-1h3.500l1.300 1.800h7.200q1 0 1 1v9.700h-14z" fill="#f9dc55" stroke="#c8901a"/><path d="M1.200 5.200h12.600v2h-12.600z" fill="#fffbe0"/><path d="M1.200 7.200h12.600v1h-12.600z" fill="#fdf0a0"/><path d="M9.300 7.500l-2.800 5.500" stroke="#222" stroke-width="1.200"/></svg>
<svg style="left:1030px;top:140px" width="16" height="16" viewBox="0 0 16 16" ><path d="M2.300 7.800v7.700h11.400v-7.700l-5.700-5.600z" fill="#dce9f9" stroke="#4a6890" stroke-width="1"/><path d="M0.600 8.600l7.400-7.400 7.400 7.400" fill="none" stroke="#3f5f8a" stroke-width="1.500"/><rect x="5.600" y="8.800" width="4.800" height="6.700" fill="#fff"/><rect x="6.600" y="9.800" width="2.800" height="5.700" fill="#2a68d0"/></svg>
<svg style="left:1053px;top:140px" width="16" height="16" viewBox="0 0 16 16" ><path d="M1 5C2 2 5 0 8 0c2 0 3.500.5 4.800 1.400l2-1.400v7.700h-7.600l-.2-1.700 1.600-1c-1.100-1.400-3.100-1.800-4.800-1.200-1 .4-1.600 1-2.200 1.700z" fill="#4fc64f" stroke="#1f8f1f" stroke-width=".8" stroke-linejoin="round"/><path d="M1 5C2 2 5 0 8 0c2 0 3.500.5 4.800 1.400l2-1.400v7.700h-7.600l-.2-1.700 1.600-1c-1.100-1.400-3.100-1.800-4.800-1.200-1 .4-1.600 1-2.200 1.700z" fill="#4fc64f" stroke="#1f8f1f" stroke-width=".8" stroke-linejoin="round" transform="rotate(180 7.450 8)"/><path d="M10 5l4-2.500v4.500h-5z" fill="#8fe28f"/><path d="M5 11l-4 2.500v-4.500h5z" fill="#8fe28f"/></svg>
<div class="sep" style="left:1076px;top:138px;height:21px"></div>
<svg style="left:1082px;top:140px" width="17" height="16" viewBox="0 0 17 16" ><path d="M0.500 0.500h8l3 3v11h-11z" fill="#f4f6fa" stroke="#7a8294"/><path d="M2 4h6M2 6h3M2 11h4M2 13h6" stroke="#aab2c4"/><circle cx="8.500" cy="8" r="4" fill="#d9ecfb" fill-opacity=".85" stroke="#5a6478" stroke-width="1.300"/><path d="M11.500 11l4 4" stroke="#3a4254" stroke-width="2.200"/></svg>
<div class="t " style="left:1103px;top:142px;letter-spacing:0.202px;">Find Files</div>
<div class="sep" style="left:1161px;top:138px;height:21px"></div>
<svg style="left:1167px;top:140px" width="16" height="16" viewBox="0 0 16 16" ><path d="M.5 1.500q0-1 1-1h2l1 1h2.500q.8 0 .8.800v4.200h-7.300z" fill="#f9dc55" stroke="#c8901a"/><path d="M1.200 3.200h6v1.300h-6z" fill="#fffbe0"/><path d="M8.500 9.500q0-1 1-1h2l1 1h2.500q.8 0 .8.800v4.200h-7.300z" fill="#f9dc55" stroke="#c8901a"/><path d="M9.200 11.200h6v1.300h-6z" fill="#fffbe0"/><path d="M3.500 7.500v4.500h4.500" fill="none" stroke="#222" stroke-width="1.100" stroke-dasharray="1 1"/></svg>
<div class="tb" style="left:722px;top:162px;width:362px;height:24px;"></div>
<div class="tb" style="left:1086px;top:162px;width:76px;height:24px;"></div>
<div class="t g" style="right:359px;top:168px;letter-spacing:-0.017px;">Properties</div>
<div class="sep" style="left:1018px;top:164px;height:20px"></div>
<svg style="left:1023px;top:165px" width="17" height="16" viewBox="0 0 17 16" ><path d="M0.500 5v10.500h14v-8.500h-7.500l-1.500-2z" fill="#f7d64a" stroke="#c89a12"/><path d="M1 8.500h13" stroke="#fdf0a8"/><polygon points="12.50,0.00 13.34,1.97 15.33,1.17 14.53,3.16 16.50,4.00 14.53,4.84 15.33,6.83 13.34,6.03 12.50,8.00 11.66,6.03 9.67,6.83 10.47,4.84 8.50,4.00 10.47,3.16 9.67,1.17 11.66,1.97" fill="#eef4ff" stroke="#6b86b8" stroke-width=".7"/></svg>
<div class="t " style="left:1046px;top:168px;letter-spacing:-0.398px;">New</div>
<div class="arr" style="left:1073px;top:173px"></div>
<div class="grip" style="left:1090px;top:167px;height:14px"></div>
<svg style="left:1097px;top:167px" width="14" height="14" viewBox="0 0 14 14" ><rect x="0.500" y="0.500" width="13" height="13" fill="#f6f8fc" stroke="#5878b8" stroke-width="1"/><path d="M7 3v8M3 7h8" stroke="#2a4a9a" stroke-width="2"/></svg>
<svg style="left:1120px;top:167px" width="14" height="14" viewBox="0 0 14 14" ><rect x="0.500" y="0.500" width="13" height="13" fill="#dcd9d2" stroke="#bdbab4" stroke-width="1"/><path d="M3 7h8" stroke="#aaa7a1" stroke-width="2"/></svg>
<svg style="left:1143px;top:167px" width="14" height="14" viewBox="0 0 14 14" ><rect x="0.500" y="0.500" width="13" height="13" fill="#f6f8fc" stroke="#5878b8" stroke-width="1"/><path d="M3.200 3l3.800 8.500 3.800-8.500" fill="none" stroke="#2a4a9a" stroke-width="1.900"/><path d="M4.500 6.300h5" stroke="#2a4a9a" stroke-width="1.500"/></svg>
<div class="a" style="left:72px;top:187px;width:643px;height:20px;background:#808080"></div>
<div class="a" style="left:721px;top:187px;width:645px;height:20px;background:#808080"></div>
<div class="t " style="left:77px;top:191px;letter-spacing:-0.085px;color:#c9c5bd">Z:\home\shubham\Desktop\</div>
<div class="a" style="left:72px;top:206px;width:643px;height:519px;background:#fff;border:1px solid;border-color:#808080 #fff #fff #808080;box-sizing:border-box;box-shadow:inset 1px 1px 0 #404040,inset -1px -1px 0 #d4d0c8"></div>
<div class="a" style="left:721px;top:206px;width:644px;height:519px;background:#fff;border:1px solid;border-color:#808080 #fff #fff #808080;box-sizing:border-box;box-shadow:inset 1px 1px 0 #404040,inset -1px -1px 0 #d4d0c8"></div>
<div class="hdr" style="left:74px;top:208px;width:149px;height:17px;"></div>
<div class="hdr" style="left:223px;top:208px;width:70px;height:17px;"></div>
<div class="hdr" style="left:293px;top:208px;width:140px;height:17px;"></div>
<div class="t " style="left:82px;top:211px;letter-spacing:-0.426px;">Name</div>
<div class="t " style="right:1081px;top:211px;letter-spacing:-0.207px;">Size</div>
<div class="t " style="left:302px;top:211px;letter-spacing:-0.078px;">Type</div>
<div class="a" style="left:125px;top:214px;width:0;height:0;border-left:4px solid transparent;border-right:4px solid transparent;border-bottom:4px solid #808080"></div>
<svg style="left:76px;top:226px" width="16" height="16" viewBox="0 0 16 16" ><path d="M0.500 0.500v13h14v-11h-8l-1.500-2z" fill="#b8bcc4" stroke="#7c8496"/><path d="M1.500 4.500h14v10h-14z" fill="#6a9ae0" stroke="#2f55a0"/><path d="M2.500 5.500h12v3.500c-4 0-8 1-12 3z" fill="#9cc0ee"/><path d="M11.500 11.500h-6v-3" fill="none" stroke="#111" stroke-width="1.300"/><path d="M3.300 9l2.200-2.800 2.200 2.800z" fill="#111"/></svg>
<div class="t " style="left:95px;top:228px;">..</div>
<div class="t " style="left:299px;top:228px;letter-spacing:-0.031px;">Parent directory</div>
<svg style="left:76px;top:242px" width="14" height="15" viewBox="0 0 14 15" ><rect x="0.500" y="0.500" width="12.500" height="13.500" rx="1" fill="#fff" stroke="#8a8a8a"/><path d="M3 3.500h7M3 5.500h7M3 7.500h7M3 9.500h7M3 11.500h5" stroke="#c2c2c2"/></svg>
<div class="t " style="left:94px;top:245px;letter-spacing:0.008px;">WinSCP.desktop</div>
<div class="t " style="right:1078px;top:245px;">1 KB</div>
<div class="t " style="left:299px;top:245px;letter-spacing:-0.065px;">.desktop file</div>
<div class="hdr" style="left:723px;top:208px;width:370px;height:17px;"></div>
<div class="hdr" style="left:1093px;top:208px;width:78px;height:17px;"></div>
<div class="hdr" style="left:1171px;top:208px;width:63px;height:17px;"></div>
<div class="hdr" style="left:1234px;top:208px;width:129px;height:17px;border-right-color:#d4d0c8;box-shadow:none"></div>
<div class="t " style="left:1101px;top:211px;letter-spacing:0.005px;">Rights</div>
<div class="t " style="left:1179px;top:211px;letter-spacing:-0.062px;">Owner</div>
<div class="t " style="right:310px;top:228px;">1 PM</div>
<div class="t " style="left:1098px;top:228px;letter-spacing:-0.094px;">rwxr-xr-x</div>
<div class="t " style="left:1177px;top:228px;letter-spacing:0.047px;">root</div>
<div class="t " style="right:310px;top:245px;">3 PM</div>
<div class="t " style="left:1098px;top:245px;letter-spacing:-0.203px;">rwxrwxr-x</div>
<div class="t " style="left:1177px;top:245px;letter-spacing:-0.123px;">admin</div>
<div class="t " style="right:310px;top:262px;">5 PM</div>
<div class="t " style="left:1098px;top:262px;letter-spacing:0.141px;">rw-rw-r--</div>
<div class="t " style="left:1177px;top:262px;letter-spacing:-0.123px;">admin</div>
<div class="t " style="left:75px;top:731px;letter-spacing:-0.174px;">0 B of 388 B in 0 of 1</div>
<div class="t " style="left:724px;top:731px;letter-spacing:-0.165px;">0 B of 1.00 MB in 0 of 2</div>
<div class="t " style="right:8px;top:731px;letter-spacing:-0.113px;">5 hidden</div>
<div class="a" style="left:72px;top:748px;width:1294px;height:1px;background:#ebe8e2"></div>
<div class="a" style="left:73px;top:748px;width:1070px;height:20px;border:1px solid #e4e1da;border-top:0;box-sizing:border-box"></div>
<div class="a" style="left:1146px;top:748px;width:32px;height:20px;border:1px solid #e4e1da;border-top:0;box-sizing:border-box"></div>
<div class="a" style="left:1181px;top:748px;width:67px;height:20px;border:1px solid #e4e1da;border-top:0;box-sizing:border-box"></div>
<div class="a" style="left:1251px;top:748px;width:32px;height:20px;border:1px solid #e4e1da;border-top:0;box-sizing:border-box"></div>
<div class="a" style="left:1286px;top:748px;width:80px;height:20px;border:1px solid #e4e1da;border-top:0;box-sizing:border-box"></div>
<svg style="left:1154px;top:750px" width="14" height="16" viewBox="0 0 14 16" ><path d="M3.500 7v-2.500a3.500 3.500 0 0 1 7 0v2.500" fill="none" stroke="#b8890e" stroke-width="1.800"/><rect x="1" y="7" width="12" height="8" rx="1" fill="#f6cf3e" stroke="#b8890e"/><path d="M2 9.500h10M2 12h10" stroke="#fbe98e"/><rect x="6.300" y="10" width="1.400" height="3" fill="#5a4306"/></svg>
<div class="t " style="left:1197px;top:752px;letter-spacing:0.180px;">SFTP-3</div>
<svg style="left:1259px;top:750px" width="16" height="16" viewBox="0 0 16 16" ><path d="M0.500 1.500h9v9h-9z" fill="#c9c6c0" stroke="#a3a19b"/><path d="M2 4h6M2 6h6M2 8h6" stroke="#9a9892"/><path d="M10.500 0.500h2.500v13M8 14.500h7M11.700 13v2" stroke="#a3a19b" stroke-width="1.300" fill="none"/></svg>
<div class="t " style="left:1307px;top:752px;letter-spacing:-0.022px;">0:06:04</div>
<div class="dlg" style="left:403px;top:177px;width:632px;height:440px;box-shadow:0 3px 9px rgba(0,0,0,.35),0 0 0 1px rgba(0,0,0,.25)"><div class="dtitle" style="height:36px;background:#3d3c3a"></div><div class="sunk" style="left:11px;top:50px;width:300px;height:353px;"></div><svg style="left:13px;top:51px" width="16" height="16" viewBox="0 0 16 16" ><rect x="1" y="4.5" width="11.5" height="8" fill="#6aa7ee" stroke="#2a3348" stroke-width="1.4"/><path d="M2 5.5h9.5v3c-4 0-6 1-9.5 2.5z" fill="#9cc8f8"/><rect x="5.2" y="13" width="3" height="1.6" fill="#2a3348"/><rect x="3" y="14.3" width="7.5" height="1.3" fill="#2a3348"/><polygon points="12.00,0.00 12.80,1.87 14.69,1.11 13.93,3.00 15.80,3.80 13.93,4.60 14.69,6.49 12.80,5.73 12.00,7.60 11.20,5.73 9.31,6.49 10.07,4.60 8.20,3.80 10.07,3.00 9.31,1.11 11.20,1.87" fill="#eef4ff" stroke="#6b86b8" stroke-width=".7"/></svg><div class="t " style="left:31px;top:52px;background:#d4d0c8">New Site</div><div class="btn" style="left:11px;top:409px;width:120px;height:25px;"></div><div class="grp" style="left:199px;top:55px;width:420px;height:196px;"></div><div class="sunk" style="left:499px;top:188px;width:109px;height:21px;"></div><div class="btn" style="left:594px;top:216px;width:14px;height:25px;border-color:#000;box-shadow:inset 1px 1px 0 #fff,inset -1px -1px 0 #404040,inset -2px -2px 0 #808080"></div><div class="arr" style="left:597px;top:227px"></div><div class="btn" style="left:596px;top:138px;width:12px;height:10px;"></div><div class="btn" style="left:596px;top:148px;width:12px;height:10px;"></div><div class="a" style="left:599px;top:141px;width:0;height:0;border-left:3px solid transparent;border-right:3px solid transparent;border-bottom:3px solid #000"></div><div class="a" style="left:599px;top:151px;width:0;height:0;border-left:3px solid transparent;border-right:3px solid transparent;border-top:3px solid #000"></div><div class="btn" style="left:539px;top:409px;width:80px;height:25px;"></div></div>
<div class="dlg" style="left:438px;top:163px;width:561px;height:469px;box-shadow:0 6px 20px rgba(0,0,0,.5),0 0 0 1px rgba(0,0,0,.3)"><div class="dtitle" style="height:37px;line-height:39px;background:#2f2d2d;letter-spacing:-0.007px;">Advanced Site Settings</div><div class="a" style="left:534px;top:9px;width:18px;height:18px;border-radius:9px;background:#e95420"></div><svg style="left:534px;top:9px" width="18" height="18" viewBox="0 0 18 18" ><path d="M5.400 5.400l7.200 7.200M12.600 5.400l-7.200 7.200" stroke="#fff" stroke-width="1.250"/></svg><div class="sunk" style="left:8px;top:46px;width:136px;height:379px;"></div><div class="t " style="left:12px;top:50px;letter-spacing:-0.220px;">Environment</div><div class="t " style="left:31px;top:66px;letter-spacing:-0.067px;">Directories</div><div class="dotsh" style="left:20px;top:72px;width:8px;height:0px;"></div><div class="t " style="left:31px;top:82px;letter-spacing:-0.136px;">Recycle bin</div><div class="dotsh" style="left:20px;top:88px;width:8px;height:0px;"></div><div class="t " style="left:31px;top:98px;letter-spacing:-0.045px;">SCP/Shell</div><div class="dotsh" style="left:20px;top:104px;width:8px;height:0px;"></div><div class="t " style="left:12px;top:114px;letter-spacing:-0.100px;">Connection</div><div class="t " style="left:31px;top:130px;letter-spacing:-0.156px;">Proxy</div><div class="dotsh" style="left:20px;top:136px;width:8px;height:0px;"></div><div class="t " style="left:31px;top:146px;letter-spacing:0.076px;">Tunnel</div><div class="dotsh" style="left:20px;top:152px;width:8px;height:0px;"></div><div class="t " style="left:12px;top:162px;letter-spacing:-0.255px;">SSH</div><div class="t " style="left:31px;top:178px;letter-spacing:-0.230px;">Key exchange</div><div class="dotsh" style="left:20px;top:184px;width:8px;height:0px;"></div><div class="a" style="left:29px;top:193px;width:75px;height:15px;background:#0a246a;outline:1px dotted #d4d0c8;outline-offset:-1px"></div><div class="t " style="left:31px;top:194px;letter-spacing:-0.100px;color:#fff">Authentication</div><div class="dotsh" style="left:20px;top:200px;width:8px;height:0px;"></div><div class="t " style="left:31px;top:210px;letter-spacing:-0.379px;">Bugs</div><div class="dotsh" style="left:20px;top:216px;width:8px;height:0px;"></div><div class="t " style="left:12px;top:226px;letter-spacing:-0.234px;">Note</div><div class="dots" style="left:19px;top:64px;width:0px;height:41px;"></div><div class="dots" style="left:19px;top:128px;width:0px;height:25px;"></div><div class="dots" style="left:19px;top:176px;width:0px;height:41px;"></div><div class="cb" style="left:168px;top:50px"></div><div class="t " style="left:185px;top:51px;letter-spacing:-0.118px;"><u>B</u>ypass authentication entirely</div><div class="grp" style="left:156px;top:77px;width:392px;height:88px;"></div><div class="glab" style="left:162px;top:73px;width:109px;padding-left:2px;letter-spacing:-0.042px;">Authentication options</div><div class="cb" style="left:168px;top:93px"><svg style="left:1px;top:1px" width="9" height="9" viewBox="0 0 9 9"><path d="M.7 3l2.400 2.400 4.600-4.600v3l-4.600 4.600-2.400-2.400z" fill="#000"/></svg></div><div class="t " style="left:185px;top:94px;letter-spacing:-0.076px;">Attempt authentication using <u>P</u>ageant</div><div class="cb" style="left:168px;top:116px"><svg style="left:1px;top:1px" width="9" height="9" viewBox="0 0 9 9"><path d="M.7 3l2.400 2.400 4.600-4.600v3l-4.600 4.600-2.400-2.400z" fill="#000"/></svg></div><div class="t " style="left:185px;top:117px;letter-spacing:-0.126px;">Attempt 'keyboard-<u>i</u>nteractive' authentication</div><div class="cb" style="left:188px;top:139px"><svg style="left:1px;top:1px" width="9" height="9" viewBox="0 0 9 9"><path d="M.7 3l2.400 2.400 4.600-4.600v3l-4.600 4.600-2.400-2.400z" fill="#000"/></svg></div><div class="t " style="left:205px;top:140px;letter-spacing:-0.082px;">Respond with a pass<u>w</u>ord to the first prompt</div><div class="grp" style="left:156px;top:177px;width:392px;height:114px;"></div><div class="glab" style="left:162px;top:173px;width:129px;padding-left:2px;letter-spacing:-0.068px;">Authentication parameters</div><div class="cb" style="left:168px;top:193px"></div><div class="t " style="left:185px;top:194px;letter-spacing:-0.035px;">Allow agent <u>f</u>orwarding</div><div class="t " style="left:168px;top:215px;letter-spacing:-0.086px;">Private <u>k</u>ey file:</div><div class="sunk" style="left:168px;top:231px;width:372px;height:21px;"></div><div class="t " style="left:171px;top:235px;letter-spacing:-0.083px;">C:\users\shubham\My Documents\vm\id_rsa.ppk</div><div class="btn" style="left:514px;top:233px;width:24px;height:17px;"><div class="t" style="left:0;right:0;top:1px">...</div></div><div class="btn" style="left:168px;top:258px;width:183px;height:25px;"><div class="t" style="left:0;right:0;top:6px;letter-spacing:-0.108px;"><u>D</u>isplay Public Key</div></div><div class="btn" style="left:357px;top:258px;width:101px;height:25px;"><div class="t" style="left:28px;top:6px;letter-spacing:0.412px;"><u>T</u>ools</div></div><div class="a" style="left:443.5px;top:268px;width:0;height:0;border-left:4.500px solid transparent;border-right:4.500px solid transparent;border-top:5px solid #000"></div><div class="grp" style="left:156px;top:303px;width:392px;height:65px;"></div><div class="glab" style="left:162px;top:299px;padding:0 2px">GSSAPI</div><div class="cb" style="left:168px;top:319px"><svg style="left:1px;top:1px" width="9" height="9" viewBox="0 0 9 9"><path d="M.7 3l2.400 2.400 4.600-4.600v3l-4.600 4.600-2.400-2.400z" fill="#000"/></svg></div><div class="t " style="left:185px;top:320px;letter-spacing:-0.062px;">Attempt <u>G</u>SSAPI authentication</div><div class="cb" style="left:188px;top:342px"></div><div class="t " style="left:205px;top:343px;letter-spacing:-0.034px;">Allow GSSAPI <u>c</u>redential delegation</div><div class="btn" style="left:8px;top:438px;width:82px;height:25px;"><div class="t" style="left:19px;top:6px;letter-spacing:0.081px;"><u>C</u>olor</div></div><div class="a" style="left:76px;top:448px;width:0;height:0;border-left:4.500px solid transparent;border-right:4.500px solid transparent;border-top:5px solid #000"></div><div class="btn" style="left:307px;top:438px;width:75px;height:25px;border-color:#000;box-shadow:inset 1px 1px 0 #fff,inset -1px -1px 0 #404040,inset -2px -2px 0 #808080"><div class="t" style="left:0;right:0;top:6px;letter-spacing:0.234px;">OK</div></div><div class="btn" style="left:392px;top:438px;width:75px;height:25px;"><div class="t" style="left:0;right:0;top:6px;letter-spacing:-0.133px;">Cancel</div></div><div class="btn" style="left:475px;top:438px;width:75px;height:25px;"><div class="t" style="left:0;right:0;top:6px"><u>H</u>elp</div></div></div>
</body></html>
